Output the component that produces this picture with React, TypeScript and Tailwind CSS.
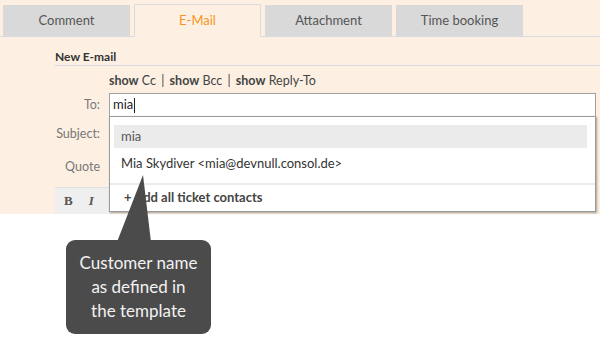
const TABS = ["Comment", "E-Mail", "Attachment", "Time booking"]
const ACTIVE = 1

function Tab({ label, active }: { label: string; active: boolean }) {
  return active ? (
    <div className="w-[127px] h-[33px] -mb-px bg-[#fdf0e3] border border-b-0 border-[#dcdcdc] flex items-center justify-center text-[13px] text-[#f7941d]">
      {label}
    </div>
  ) : (
    <div className="w-[127px] h-[31px] bg-[#d9d9d9] flex items-center justify-center text-[13px] text-[#555]">
      {label}
    </div>
  )
}

export default function App() {
  return (
    <div className="relative w-[600px] h-[346px] bg-white overflow-hidden font-['Lato',sans-serif]">
      <div className="bg-[#fdf0e3] h-[214px]">
        {/* Tabs */}
        <div className="flex items-end gap-[4px] pl-[3px] pt-[4px] border-b border-[#d5dbe0]">
          {TABS.map((t, i) => (
            <Tab key={t} label={t} active={i === ACTIVE} />
          ))}
        </div>

        {/* Form */}
        <div className="pl-[55px] pt-[12px]">
          <div className="h-[17px] border-b border-[#d5dbe0] text-[12px] font-bold text-[#333] leading-[15px]">
            New E-mail
          </div>
          <div className="pl-[54px] pt-[6px] h-[27px] text-[12.5px] text-[#444]">
            <b>show</b> Cc <span className="mx-[2px]">|</span> <b>show</b> Bcc <span className="mx-[2px]">|</span> <b>show</b> Reply-To
          </div>
          <div className="flex items-center h-[24px]">
            <span className="w-[45px] text-right text-[12.5px] text-[#777]">To:</span>
            <div className="ml-[9px] w-[487px] h-[24px] bg-white border border-[#a0a0a0] flex items-center pl-[3px] text-[13px] text-[#222]">
              mia<span className="w-px h-[15px] bg-[#222] ml-px" />
            </div>
          </div>
          <div className="flex items-center h-[34px]">
            <span className="w-[45px] text-right text-[12.5px] text-[#777]">Subject:</span>
          </div>
          <div className="flex items-center h-[32px]">
            <span className="w-[45px] text-right text-[12.5px] text-[#777]">Quote</span>
          </div>
          <div className="mt-[4px] w-[60px] h-[27px] bg-[#efefef] border-t border-[#e0e0e0] flex items-center gap-[16px] pl-[9px] font-['Liberation_Serif',serif] text-[13px] font-bold text-[#555]">
            <span>B</span>
            <span className="italic">I</span>
          </div>
        </div>
      </div>

      {/* Autocomplete dropdown */}
      <div className="absolute left-[109px] top-[116px] w-[487px] h-[96px] bg-white border border-[#9a9a9a] shadow-[1px_1px_2px_rgba(0,0,0,0.35)] text-[13px]">
        <div className="ml-[4px] mr-[8px] mt-[8px] h-[23px] bg-[#ebebeb] flex items-center pl-[7px] text-[#555]">mia</div>
        <div className="h-[35px] pb-[4px] flex items-center pl-[11px] text-[#333]">Mia Skydiver &lt;mia@devnull.consol.de&gt;</div>
        <div className="border-t-2 border-[#ebebeb] h-[27px] flex items-center pl-[14px] font-bold text-[#444]">
          + Add all ticket contacts
        </div>
      </div>

      {/* Callout */}
      <svg className="absolute left-0 top-0" width="600" height="346">
        <polygon points="117,242 151,242 143,175" fill="#4b4b4b" />
      </svg>
      <div className="absolute left-[66px] top-[240px] w-[145px] h-[94px] rounded-[9px] bg-[#4b4b4b] flex items-center justify-center text-center text-[17px] leading-[24px] text-[#f2f2f2]">
        Customer name
        <br />
        as defined in
        <br />
        the template
      </div>
    </div>
  )
}
